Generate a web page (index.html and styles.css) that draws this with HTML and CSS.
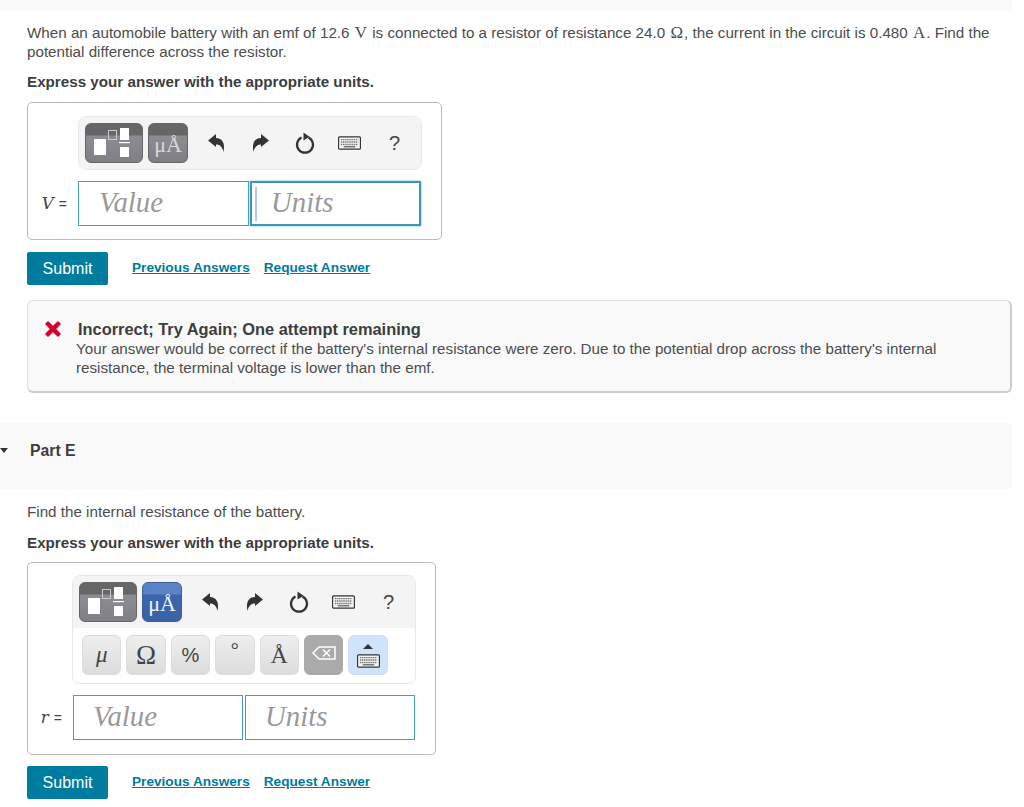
FILE: index.html
```html
<!DOCTYPE html>
<html lang="en">
<head>
    <meta charset="UTF-8">
    <meta name="viewport" content="width=device-width, initial-scale=1.0">
    <title>Part D and Part E</title>
    <link rel="stylesheet" href="styles.css">
</head>
<body>
    <svg class="defs" width="0" height="0">
        <symbol id="undo" viewBox="0 0 18 18">
            <path d="M0 6.500 8 0v4c6 0 9.500 5 7.500 14-1-5-3.500-7.500-7.500-7.500V13z"/>
        </symbol>
        <symbol id="reload" viewBox="0 0 22 22">
            <path d="M7.500 5.500a8 8 0 1 0 7 0" fill="none" stroke="currentColor" stroke-width="2.200"/>
            <path d="M9.500 .5 15.500 4.700 9.500 8.600z"/>
        </symbol>
        <symbol id="keyboard" viewBox="0 0 24 14">
            <rect x=".6" y=".6" width="22.800" height="12.800" rx="1" fill="#f4f4f4" stroke="#333" stroke-width="1.200"/>
            <path d="M3 3.500h18M3 6h18M3 8.500h18" stroke="#777" stroke-width="1.500" stroke-dasharray="1.500 .7"/>
            <path d="M6 11h12" stroke="#777" stroke-width="1.500"/>
        </symbol>
        <symbol id="template" viewBox="0 0 58 40">
            <rect x="9" y="16" width="12" height="16" fill="#fff"/>
            <rect x="23.500" y="7.500" width="8" height="9" fill="none" stroke="#ccc" stroke-width="1"/>
            <rect x="35" y="5" width="9" height="12" fill="#fff"/>
            <rect x="34" y="19" width="11" height="1.200" fill="#fff"/>
            <rect x="35" y="24" width="9" height="10" fill="#fff"/>
        </symbol>
    </svg>

    <div class="top-band"></div>

    <main class="part">
        <p class="text">When an automobile battery with an emf of 12.6 <span class="math">V</span> is connected to a resistor of resistance 24.0 <span class="math">Ω</span>, the current in the circuit is 0.480 <span class="math">A</span>. Find the<br>potential difference across the resistor.</p>
        <p class="hint">Express your answer with the appropriate units.</p>

        <div class="answer-box first">
            <div class="toolbar">
                <div class="tool-row">
                    <div class="tpl-btn"><svg class="tpl-icon"><use href="#template"/></svg></div>
                    <div class="unit-btn">μÅ</div>
                    <span class="tool"><svg class="arrow"><use href="#undo"/></svg></span>
                    <span class="tool"><svg class="arrow flip"><use href="#undo"/></svg></span>
                    <span class="tool"><svg class="reload"><use href="#reload"/></svg></span>
                    <span class="tool"><svg class="keys"><use href="#keyboard"/></svg></span>
                    <span class="tool help">?</span>
                </div>
            </div>
            <div class="input-row">
                <span class="var">V <i>=</i></span>
                <div class="field">Value</div>
                <div class="field focused"><span class="caret"></span>Units</div>
            </div>
        </div>

        <div class="actions">
            <button class="submit">Submit</button>
            <a class="link" href="#">Previous Answers</a>
            <a class="link" href="#">Request Answer</a>
        </div>

        <div class="feedback">
            <svg class="cross" viewBox="0 0 16 16"><path d="M0 3 3 0l5 4.800L13 0l3 3-4.800 5 4.800 5-3 3-5-4.800L3 16l-3-3 4.800-5z"/></svg>
            <div class="feedback-body">
                <div class="feedback-title">Incorrect; Try Again; One attempt remaining</div>
                <div class="feedback-text">Your answer would be correct if the battery's internal resistance were zero. Due to the potential drop across the battery's internal resistance, the terminal voltage is lower than the emf.</div>
            </div>
        </div>
    </main>

    <div class="part-head">
        <span class="caret-down"></span>
        <span class="part-name">Part E</span>
    </div>

    <section class="part part-e">
        <p class="text">Find the internal resistance of the battery.</p>
        <p class="hint">Express your answer with the appropriate units.</p>

        <div class="answer-box second">
            <div class="toolbar">
                <div class="tool-row">
                    <div class="tpl-btn"><svg class="tpl-icon"><use href="#template"/></svg></div>
                    <div class="unit-btn active">μÅ</div>
                    <span class="tool"><svg class="arrow"><use href="#undo"/></svg></span>
                    <span class="tool"><svg class="arrow flip"><use href="#undo"/></svg></span>
                    <span class="tool"><svg class="reload"><use href="#reload"/></svg></span>
                    <span class="tool"><svg class="keys"><use href="#keyboard"/></svg></span>
                    <span class="tool help">?</span>
                </div>
                <div class="key-row">
                    <div class="key mu">μ</div>
                    <div class="key omega">Ω</div>
                    <div class="key pct">%</div>
                    <div class="key deg">°</div>
                    <div class="key">Å</div>
                    <div class="key back">
                        <svg class="back-icon" viewBox="0 0 24 14"><path d="M7 1h16v12H7L1 7z" fill="none" stroke="#fff" stroke-width="1.500"/><path d="M11 3.500l7 7m0-7l-7 7" stroke="#fff" stroke-width="1.500"/></svg>
                    </div>
                    <div class="key kbd">
                        <span class="up"></span>
                        <svg class="keys"><use href="#keyboard"/></svg>
                    </div>
                </div>
            </div>
            <div class="input-row">
                <span class="var">r <i>=</i></span>
                <div class="field">Value</div>
                <div class="field">Units</div>
            </div>
        </div>

        <div class="actions">
            <button class="submit">Submit</button>
            <a class="link" href="#">Previous Answers</a>
            <a class="link" href="#">Request Answer</a>
        </div>
    </section>
</body>
</html>
```

FILE: styles.css
```css
body {
    margin: 0;
    width: 1012px;
    height: 807px;
    overflow: hidden;
    font-family: "Liberation Sans", Arial, sans-serif;
    font-size: 15.2px;
    line-height: 19px;
    color: #4d4d4d;
    background-color: #fff;
}
.defs {
    position: absolute;
}
.top-band {
    height: 11px;
    background-color: #f9f9f9;
}
.part {
    padding-left: 27px;
}
.text {
    margin: 0;
    padding: 12px 15px 0 0;
}
.part-e .text {
    padding-top: 13px;
}
.math {
    font-family: "Liberation Serif", serif;
    font-size: 17px;
    line-height: 0;
    margin: 0 1px;
}
.hint {
    margin: 11px 0 0;
    font-weight: bold;
    color: #3d3d3d;
}
.part-e .hint {
    margin-top: 12px;
}
.answer-box {
    margin-top: 11px;
    box-sizing: border-box;
    border: 1px solid #bbb;
    border-radius: 5px;
    background-color: #fff;
}
.answer-box.first {
    width: 415px;
    height: 138px;
    padding: 13px 0 0 50px;
}
.answer-box.second {
    width: 409px;
    height: 193px;
    margin-top: 10px;
    padding: 12px 0 0 44px;
}
.toolbar {
    box-sizing: border-box;
    width: 344px;
    border: 1px solid #e8e8e8;
    border-radius: 8px;
    background-color: #fff;
    overflow: hidden;
}
.tool-row {
    display: flex;
    align-items: center;
    height: 52px;
    padding-left: 6px;
    background-color: #f4f4f4;
}
.tpl-btn, .unit-btn {
    box-sizing: border-box;
    height: 40px;
    border: 1px solid #666;
    border-radius: 6px;
    background: linear-gradient(#666 0, #666 11px, #8d8c93 12px, #807f86 100%);
}
.tpl-btn {
    width: 58px;
    margin-right: 5px;
}
.tpl-icon {
    display: block;
    width: 58px;
    height: 40px;
    margin: -1px;
}
.unit-btn {
    width: 40px;
    margin-right: 5px;
    font-family: "Liberation Serif", serif;
    font-size: 22px;
    line-height: 42px;
    text-align: center;
    color: #d9d9d9;
}
.unit-btn.active {
    border-color: #3f5f96;
    color: #f2f6ff;
    background: linear-gradient(#5c82c6 0, #5c82c6 11px, #3c65ad 12px, #3a62a8 100%);
}
.tool {
    display: flex;
    align-items: center;
    justify-content: center;
    width: 44.800px;
    color: #333;
}
.arrow {
    width: 18px;
    height: 18px;
    margin-left: 4px;
    fill: #333;
}
.arrow.flip {
    margin-left: 0;
    transform: scaleX(-1);
}
.reload {
    width: 22px;
    height: 22px;
    fill: #333;
    color: #333;
}
.keys {
    width: 23px;
    height: 14px;
}
.tool.help {
    font-size: 20px;
    color: #444;
}
.key-row {
    display: flex;
    gap: 5px;
    padding: 7px 0 8px 9px;
}
.key {
    box-sizing: border-box;
    width: 39.400px;
    height: 40px;
    border: 1px solid #ddd;
    border-radius: 6px;
    background: linear-gradient(#eee, #dcdcdc);
    font-family: "Liberation Serif", serif;
    font-size: 24px;
    line-height: 38px;
    text-align: center;
    color: #444;
}
.key.mu {
    font-style: italic;
    font-size: 23px;
}
.key.omega {
    font-size: 27px;
}
.key.pct {
    font-family: "Liberation Sans", sans-serif;
    font-size: 20px;
}
.key.deg {
    font-size: 20px;
    line-height: 28px;
}
.key.back {
    border-color: #aaa;
    background: #aaa;
}
.back-icon {
    display: block;
    width: 24px;
    height: 14px;
    margin: 10px auto 0;
}
.key.kbd {
    display: flex;
    flex-direction: column;
    align-items: center;
    gap: 5px;
    padding-top: 8px;
    border-color: #cde0f5;
    background: #cfe4fb;
}
.up {
    width: 0;
    height: 0;
    border-left: 5px solid transparent;
    border-right: 5px solid transparent;
    border-bottom: 5px solid #333;
}
.input-row {
    display: flex;
    align-items: center;
    margin-top: 11px;
    position: relative;
}
.second .input-row {
    margin-left: 1px;
}
.var {
    position: absolute;
    right: 100%;
    margin-right: 11px;
    white-space: nowrap;
    font-family: "DejaVu Serif", serif;
    font-style: italic;
    font-size: 16.500px;
    color: #444;
}
.var i {
    font-style: normal;
    font-size: 14px;
    font-family: "Liberation Sans", sans-serif;
}
.field {
    box-sizing: border-box;
    position: relative;
    width: 171px;
    height: 45px;
    margin-right: 1px;
    padding-left: 20px;
    border: 1px solid #3f9fbc;
    font-family: "Liberation Serif", serif;
    font-style: italic;
    font-size: 28.800px;
    line-height: 41px;
    color: #999;
}
.second .field {
    width: 170px;
    margin-right: 2px;
    padding-left: 19px;
}
.field.focused {
    border: 2px solid #3d97b3;
    box-shadow: 0 0 2px #6fb4c9;
    padding-left: 19px;
    line-height: 39px;
}
.caret {
    position: absolute;
    left: 3px;
    top: 4px;
    width: 2px;
    height: 34px;
    background-color: #b5c5ee;
}
.actions {
    display: flex;
    align-items: center;
    margin-top: 12px;
}
.second + .actions {
    margin-top: 11px;
}
.submit {
    width: 81px;
    height: 33px;
    margin-right: 24px;
    padding: 0;
    border: none;
    border-radius: 2px;
    background-color: #007c9e;
    color: #fff;
    font-family: inherit;
    font-size: 16px;
}
.link {
    margin-right: 14px;
    margin-bottom: 2px;
    font-weight: bold;
    color: #007a9c;
    font-size: 13.650px;
}
.feedback {
    display: flex;
    box-sizing: border-box;
    width: 985px;
    height: 93px;
    margin-top: 15px;
    padding: 19px 20px 0 17px;
    border: 1px solid #e0e0e0;
    border-bottom: 2px solid #ccc;
    border-right: 2px solid #ccc;
    border-radius: 6px;
    background-color: #f9f9f9;
}
.cross {
    flex: none;
    width: 16px;
    height: 16px;
    margin: 1px 15px 0 0;
    fill: #d6002a;
}
.feedback-title {
    margin-left: 2px;
    font-weight: bold;
    font-size: 16.400px;
    color: #3d3d3d;
}
.part-head {
    display: flex;
    align-items: center;
    box-sizing: border-box;
    height: 66px;
    margin-top: 30px;
    padding-bottom: 12px;
    background-color: #f9f9f9;
}
.caret-down {
    width: 0;
    height: 0;
    border-left: 4px solid transparent;
    border-right: 4px solid transparent;
    border-top: 5px solid #333;
    margin-right: 22px;
}
.part-name {
    font-weight: bold;
    font-size: 15.800px;
    color: #3d3d3d;
}
```
